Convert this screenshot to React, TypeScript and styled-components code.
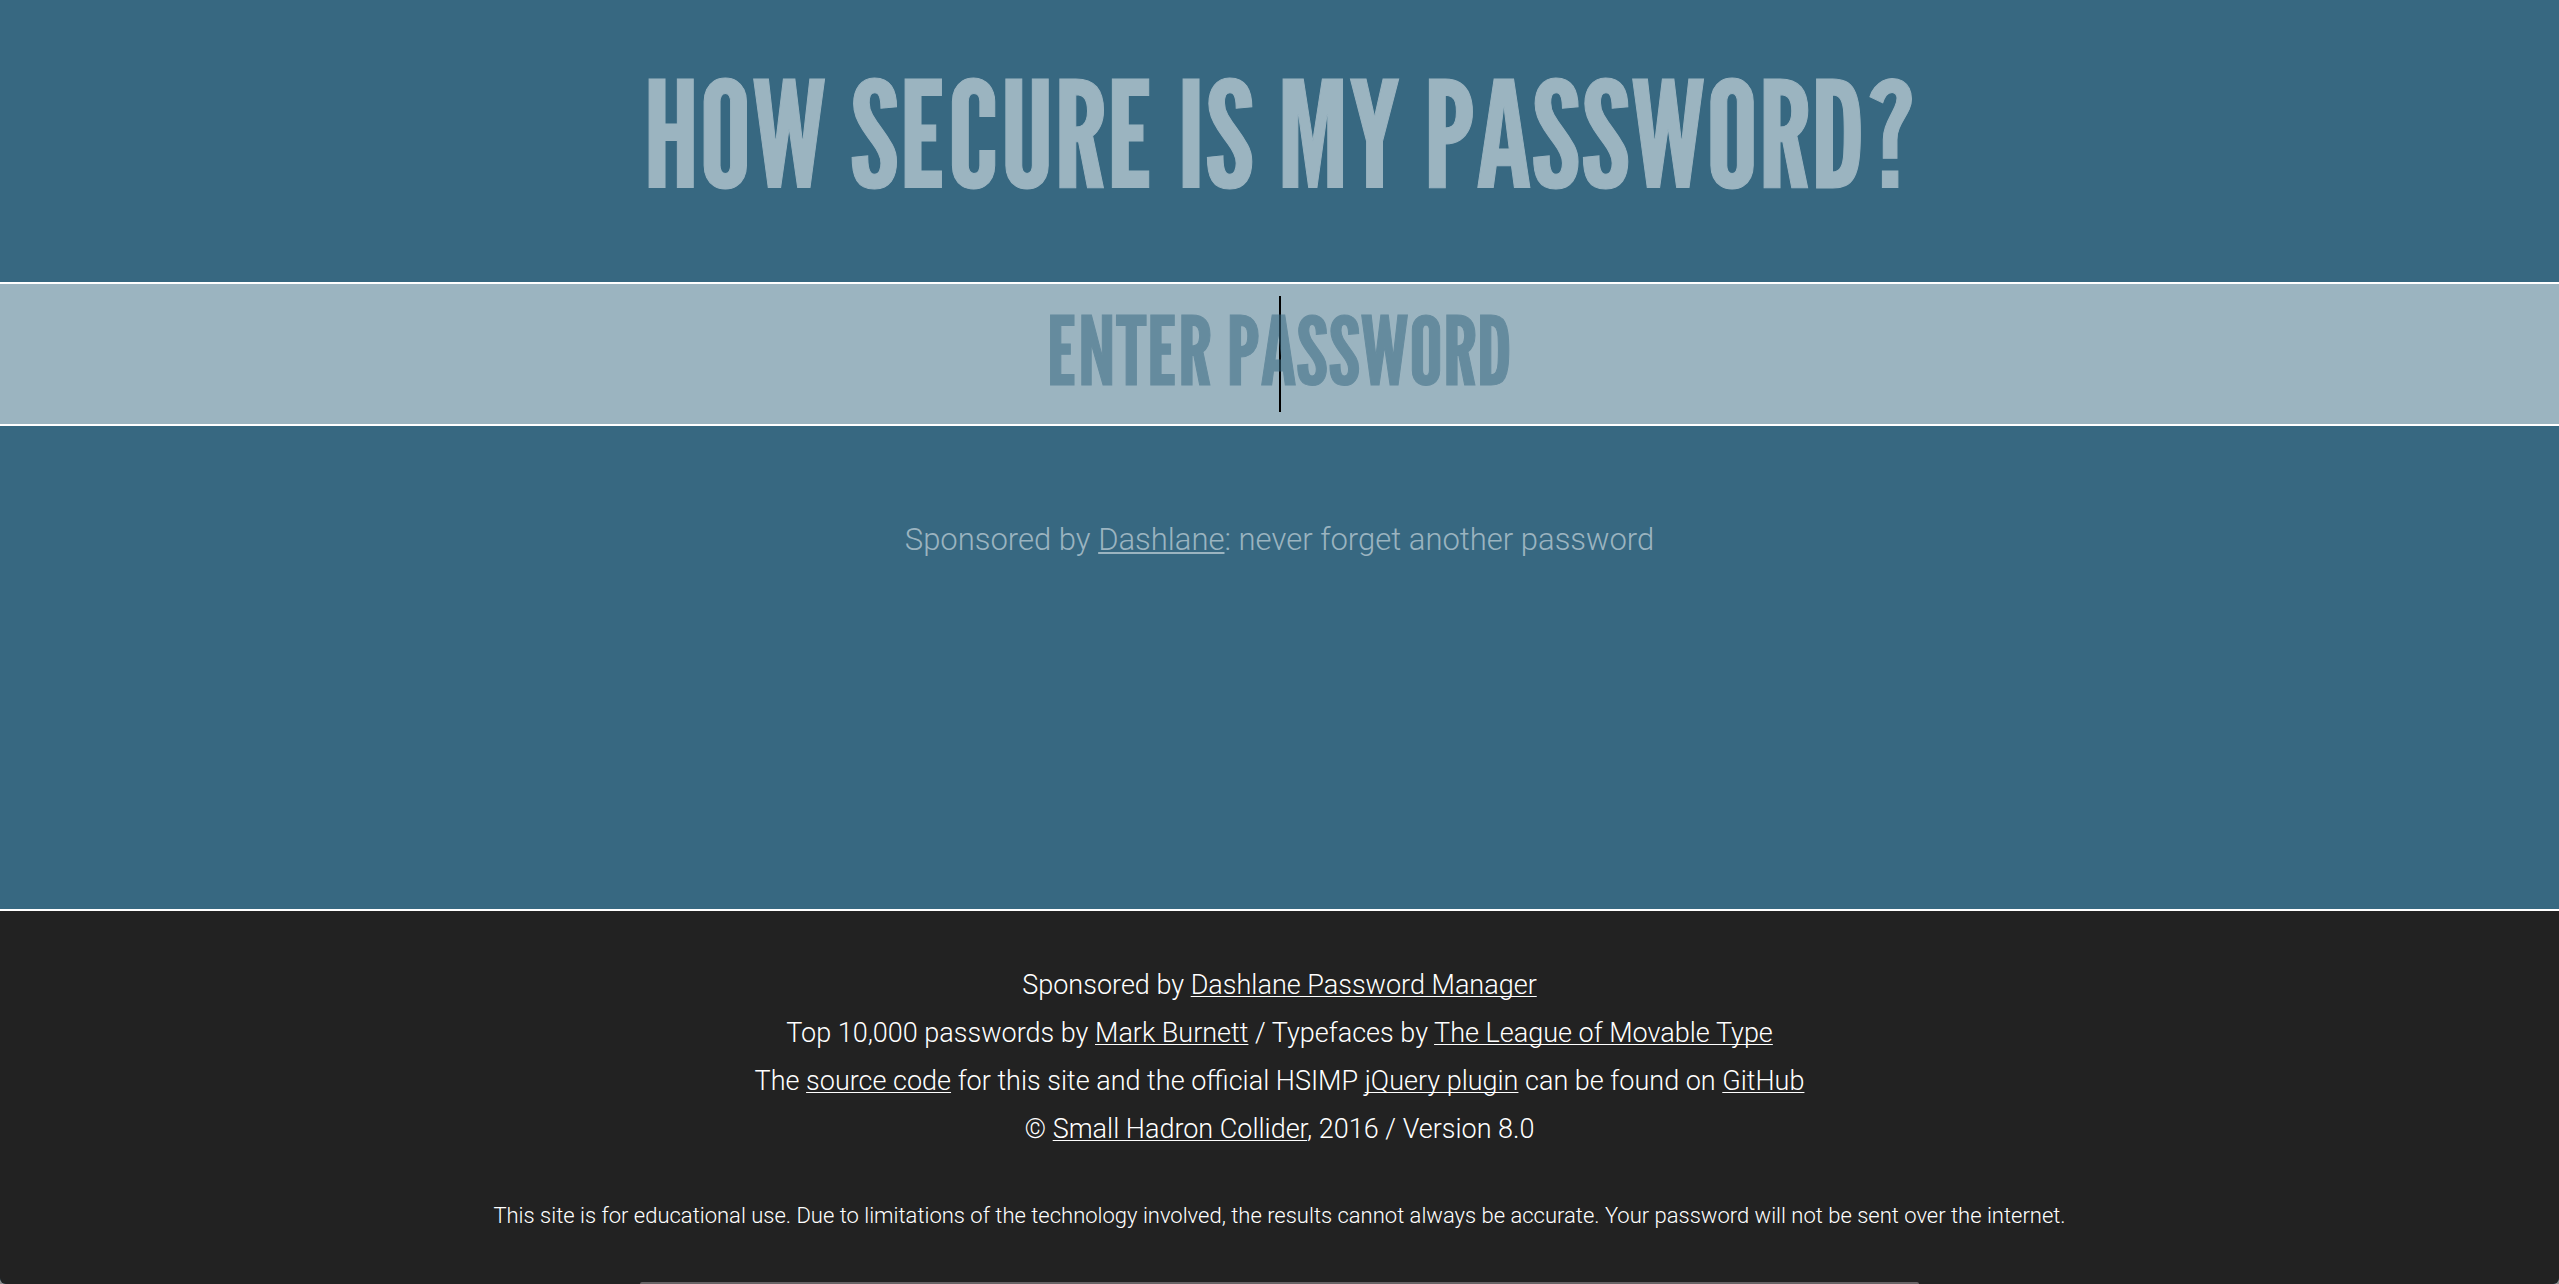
import React from "react";
import styled, { createGlobalStyle } from "styled-components";

const colors = {
  page: "#376881",
  haze: "rgba(255, 255, 255, 0.5)",
  mist: "#9bb4c0",
  footer: "#222222",
  line: "#ffffff",
};

const displayFont = `"League Gothic", "Open Sans Condensed", "Roboto Condensed", sans-serif`;
const bodyFont = `Roboto, "Liberation Sans", sans-serif`;

const GlobalStyle = createGlobalStyle`
  * {
    box-sizing: border-box;
  }

  body {
    margin: 0;
    background: #8c8c8c;
    font-family: ${bodyFont};
    font-weight: 300;
  }
`;

const Page = styled.div`
  display: flex;
  flex-direction: column;
  min-height: 100vh;
  overflow: hidden;
  border-radius: 0 0 6px 6px;
  background: ${colors.page};
  text-align: center;
`;

const Header = styled.header`
  padding: 64px 24px 78px;
`;

const Title = styled.h1`
  margin: 0;
  color: ${colors.mist};
  font-family: ${displayFont};
  font-size: 147px;
  font-weight: 400;
  line-height: 140px;
  text-transform: uppercase;
  -webkit-text-stroke: 1px ${colors.mist};
`;

const Main = styled.main`
  flex: 1;
`;

const Field = styled.div`
  position: relative;
  border-top: 2px solid ${colors.line};
  border-bottom: 2px solid ${colors.line};
  background: ${colors.haze};
`;

const Caret = styled.span`
  position: absolute;
  top: 12px;
  bottom: 12px;
  left: calc(50% - 1px);
  width: 2px;
  background: #000000;
`;

const PasswordInput = styled.input`
  position: relative;
  display: block;
  width: 100%;
  height: 140px;
  padding: 0 24px 8px;
  border: 0;
  outline: 0;
  background: transparent;
  caret-color: transparent;
  color: ${colors.page};
  font-family: ${displayFont};
  font-size: 95px;
  font-weight: 400;
  text-align: center;
  -webkit-text-stroke: 1px ${colors.page};

  &::placeholder {
    color: ${colors.page};
    opacity: 0.53;
    text-transform: uppercase;
  }
`;

const Sponsor = styled.p`
  margin: 90px 24px;
  color: ${colors.mist};
  font-size: 31px;
  line-height: 48px;
`;

const Link = styled.a<{ $thickness?: number }>`
  color: inherit;
  text-decoration: underline;
  text-decoration-skip-ink: none;
  text-decoration-thickness: ${({ $thickness = 1 }) => $thickness}px;
  text-underline-offset: 2px;
`;

const Footer = styled.footer`
  padding: 50px 24px 48px;
  border-top: 2px solid ${colors.line};
  background: ${colors.footer};
  color: #ffffff;
`;

const Credit = styled.p`
  margin: 0;
  font-size: 27px;
  line-height: 48px;
`;

const Disclaimer = styled.p`
  margin: 43px 0 0;
  font-size: 22px;
  line-height: 40px;
`;

const BottomSheet = styled.div`
  position: fixed;
  bottom: 0;
  left: 25%;
  right: 25%;
  height: 2px;
  border-radius: 2px 2px 0 0;
  background: #686466;
`;

export default function App() {
  return (
    <>
      <GlobalStyle />
      <Page>
        <Header>
          <Title>How Secure Is My Password?</Title>
        </Header>
        <Main>
          <Field>
            <Caret aria-hidden="true" />
            <PasswordInput type="password" placeholder="Enter Password" aria-label="Enter Password" />
          </Field>
          <Sponsor>
            Sponsored by <Link href="#dashlane" $thickness={2}>Dashlane</Link>: never forget another password
          </Sponsor>
        </Main>
        <Footer>
          <Credit>
            Sponsored by <Link href="#dashlane">Dashlane Password Manager</Link>
          </Credit>
          <Credit>
            Top 10,000 passwords by <Link href="#burnett">Mark Burnett</Link> / Typefaces by{" "}
            <Link href="#league">The League of Movable Type</Link>
          </Credit>
          <Credit>
            The <Link href="#source">source code</Link> for this site and the official HSIMP{" "}
            <Link href="#plugin">jQuery plugin</Link> can be found on <Link href="#github">GitHub</Link>
          </Credit>
          <Credit>
            © <Link href="#collider">Small Hadron Collider</Link>, 2016 / Version 8.0
          </Credit>
          <Disclaimer>
            This site is for educational use. Due to limitations of the technology involved, the results cannot always
            be accurate. Your password will not be sent over the internet.
          </Disclaimer>
        </Footer>
      </Page>
      <BottomSheet />
    </>
  );
}
